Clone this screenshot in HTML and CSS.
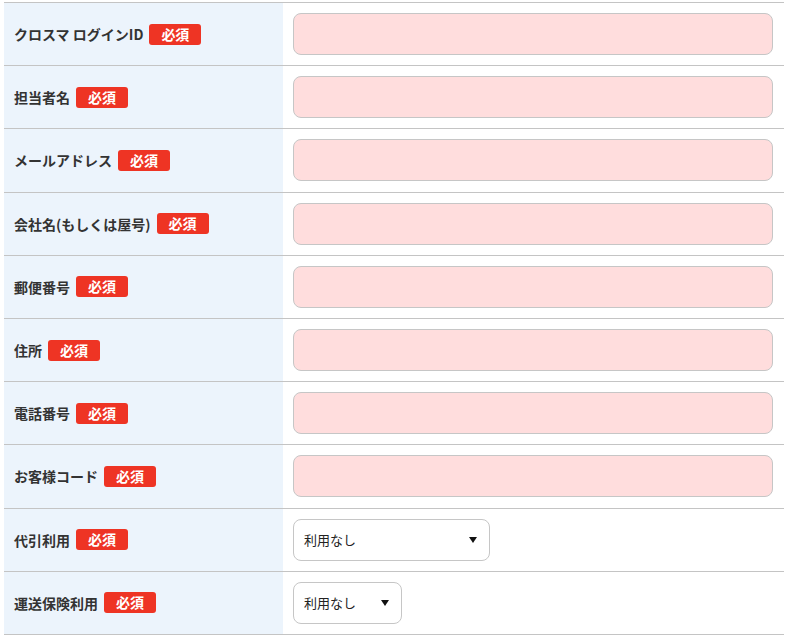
FILE: index.html
```html
<!DOCTYPE html>
<html lang="ja">
<head>
<meta charset="utf-8">
<link rel="stylesheet" href="styles.css">
</head>
<body>
<div class="form">
  <div class="row"><div class="label">クロスマ ログインID<span class="req">必須</span></div><div class="field"><div class="input"></div></div></div>
  <div class="row"><div class="label">担当者名<span class="req">必須</span></div><div class="field"><div class="input"></div></div></div>
  <div class="row"><div class="label">メールアドレス<span class="req">必須</span></div><div class="field"><div class="input"></div></div></div>
  <div class="row"><div class="label">会社名(もしくは屋号)<span class="req">必須</span></div><div class="field"><div class="input"></div></div></div>
  <div class="row"><div class="label">郵便番号<span class="req">必須</span></div><div class="field"><div class="input"></div></div></div>
  <div class="row"><div class="label">住所<span class="req">必須</span></div><div class="field"><div class="input"></div></div></div>
  <div class="row"><div class="label">電話番号<span class="req">必須</span></div><div class="field"><div class="input"></div></div></div>
  <div class="row"><div class="label">お客様コード<span class="req">必須</span></div><div class="field"><div class="input"></div></div></div>
  <div class="row"><div class="label">代引利用<span class="req">必須</span></div><div class="field"><div class="select wide"><span>利用なし</span><span class="arrow"></span></div></div></div>
  <div class="row"><div class="label">運送保険利用<span class="req">必須</span></div><div class="field"><div class="select narrow"><span>利用なし</span><span class="arrow"></span></div></div></div>
</div>
</body>
</html>
```
FILE: styles.css
```css
html, body {
  margin: 0;
  padding: 0;
  background: #ffffff;
}
body {
  font-family: "Noto Sans CJK JP", "Noto Sans", sans-serif;
  color: #333333;
}
.form {
  width: 780px;
  margin: 2px 0 0 4px;
  border-top: 1px solid #c4c4c4;
}
.row {
  display: grid;
  grid-template-columns: 279px 1fr;
  border-bottom: 1px solid #c4c4c4;
}
.label {
  background: #ecf4fc;
  display: flex;
  align-items: center;
  padding: 0 10px;
  font-size: 14px;
  font-weight: bold;
  color: #333333;
  letter-spacing: 0;
}
.req {
  display: inline-block;
  margin-left: 6px;
  background: #ee3424;
  color: #ffffff;
  font-size: 14px;
  font-weight: bold;
  line-height: 21px;
  height: 21px;
  width: 52px;
  text-align: center;
  border-radius: 3px;
  font-family: "Noto Sans CJK JP", serif;
}
.field {
  padding: 10px 11px 10.2px 10px;
}
.input {
  height: 42px;
  box-sizing: border-box;
  background: #ffdddd;
  border: 1px solid #c6c6c6;
  border-radius: 8px;
}
.select {
  height: 42px;
  box-sizing: border-box;
  background: #ffffff;
  border: 1px solid #c6c6c6;
  border-radius: 8px;
  display: flex;
  align-items: center;
  justify-content: space-between;
  padding: 0 12px 0 10px;
  font-size: 13px;
  color: #222222;
}
.select.wide { width: 197px; }
.select.narrow { width: 109px; }
.arrow {
  width: 0;
  height: 0;
  border-left: 4.5px solid transparent;
  border-right: 4.5px solid transparent;
  border-top: 6px solid #111111;
}
```
